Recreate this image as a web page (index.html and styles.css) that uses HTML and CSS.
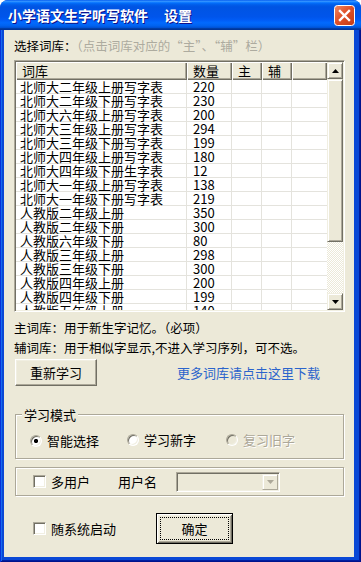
FILE: index.html
```html
<!DOCTYPE html>
<html lang="zh-CN">
<head>
<meta charset="utf-8">
<title>设置</title>
<link rel="stylesheet" href="styles.css">
</head>
<body>
<div class="window">
  <header class="titlebar">
    <span class="title">小学语文生字听写软件<span class="title-sub">设置</span></span>
    <span class="close">
      <svg width="21" height="21" viewBox="0 0 21 21">
        <defs>
          <linearGradient id="cg" x1="0" y1="0" x2="1" y2="1">
            <stop offset="0" stop-color="#F08A66"/>
            <stop offset="0.45" stop-color="#E0522A"/>
            <stop offset="1" stop-color="#C23A14"/>
          </linearGradient>
        </defs>
        <rect x="0.5" y="0.5" width="20" height="20" rx="3" fill="url(#cg)" stroke="#fff"/>
        <path d="M6 6 L15 15 M15 6 L6 15" stroke="#fff" stroke-width="2.4" stroke-linecap="square"/>
      </svg>
    </span>
  </header>
  <div class="frame">
    <main class="client">
      <div class="hint">选择词库：<span class="hint-gray">（点击词库对应的“主”、“辅”栏）</span></div>

      <div class="listbox">
        <div class="lv">
          <div class="lv-head">
            <div class="hd">词库</div>
            <div class="hd">数量</div>
            <div class="hd">主</div>
            <div class="hd">辅</div>
            <div class="hd"></div>
          </div>
          <div class="lv-body">
            <div class="row"><span>北师大二年级上册写字表</span><span>220</span><span></span><span></span><span></span></div>
            <div class="row"><span>北师大二年级下册写字表</span><span>230</span><span></span><span></span><span></span></div>
            <div class="row"><span>北师大六年级上册写字表</span><span>200</span><span></span><span></span><span></span></div>
            <div class="row"><span>北师大三年级上册写字表</span><span>294</span><span></span><span></span><span></span></div>
            <div class="row"><span>北师大三年级下册写字表</span><span>199</span><span></span><span></span><span></span></div>
            <div class="row"><span>北师大四年级上册写字表</span><span>180</span><span></span><span></span><span></span></div>
            <div class="row"><span>北师大四年级下册生字表</span><span>12</span><span></span><span></span><span></span></div>
            <div class="row"><span>北师大一年级上册写字表</span><span>138</span><span></span><span></span><span></span></div>
            <div class="row"><span>北师大一年级下册写字表</span><span>219</span><span></span><span></span><span></span></div>
            <div class="row"><span>人教版二年级上册</span><span>350</span><span></span><span></span><span></span></div>
            <div class="row"><span>人教版二年级下册</span><span>300</span><span></span><span></span><span></span></div>
            <div class="row"><span>人教版六年级下册</span><span>80</span><span></span><span></span><span></span></div>
            <div class="row"><span>人教版三年级上册</span><span>298</span><span></span><span></span><span></span></div>
            <div class="row"><span>人教版三年级下册</span><span>300</span><span></span><span></span><span></span></div>
            <div class="row"><span>人教版四年级上册</span><span>200</span><span></span><span></span><span></span></div>
            <div class="row"><span>人教版四年级下册</span><span>199</span><span></span><span></span><span></span></div>
            <div class="row"><span>人教版五年级上册</span><span>140</span><span></span><span></span><span></span></div>
          </div>
        </div>
        <div class="vscroll">
          <div class="sb-btn"><svg width="7" height="4" viewBox="0 0 7 4"><path d="M3.5 0 L7 4 L0 4 Z" fill="#000"/></svg></div>
          <div class="sb-thumb"></div>
          <div class="sb-track"></div>
          <div class="sb-btn"><svg width="7" height="4" viewBox="0 0 7 4"><path d="M0 0 L7 0 L3.5 4 Z" fill="#000"/></svg></div>
        </div>
      </div>

      <p class="note first">主词库：用于新生字记忆。（必项）</p>
      <p class="note">辅词库：用于相似字显示,不进入学习序列，可不选。</p>

      <div class="actions">
        <button class="btn btn-relearn">重新学习</button>
        <a class="more-link" href="#">更多词库请点击这里下载</a>
      </div>

      <section class="group group-mode">
        <span class="legend">学习模式</span>
        <div class="radios">
          <label class="opt opt-1"><span class="radio checked"></span>智能选择</label>
          <label class="opt opt-2"><span class="radio"></span>学习新字</label>
          <label class="opt opt-3 disabled"><span class="radio"></span>复习旧字</label>
        </div>
      </section>

      <section class="group group-user">
        <label class="chk-label"><span class="checkbox"></span>多用户</label>
        <span class="user-label">用户名</span>
        <span class="combo">
          <span class="combo-btn"><svg width="7" height="4" viewBox="0 0 7 4"><path d="M0 0 L7 0 L3.5 4 Z" fill="#ACA899"/></svg></span>
        </span>
      </section>

      <div class="bottom">
        <label class="chk-label"><span class="checkbox"></span>随系统启动</label>
        <button class="btn btn-default">确定</button>
      </div>
    </main>
  </div>
</div>
</body>
</html>
```

FILE: styles.css
```css
html, body {
  margin: 0;
  padding: 0;
}
body {
  width: 361px;
  height: 562px;
  overflow: hidden;
  background: #fff;
  font-family: "Noto Sans CJK SC", "Noto Sans", sans-serif;
  font-size: 13px;
  color: #000;
}
.window {
  width: 361px;
  height: 562px;
  display: flex;
  flex-direction: column;
  border-radius: 8px 8px 0 0;
  overflow: hidden;
  background: #0B4BDB;
}
.titlebar {
  height: 30px;
  flex: none;
  box-sizing: border-box;
  display: flex;
  align-items: center;
  justify-content: space-between;
  padding: 0 6px 0 8px;
  background: linear-gradient(180deg, #0058EE 0%, #3593FF 4%, #288EFF 6%, #127DFF 8%, #036FFC 10%, #0262EE 14%, #0057E5 20%, #0054E3 24%, #0055EB 56%, #005BF5 66%, #026AFE 76%, #0062EF 86%, #0052D6 92%, #0040AB 94%, #003092 100%);
}
.title {
  color: #fff;
  font-weight: 700;
  font-size: 14px;
  line-height: 18px;
  text-shadow: 1px 1px 0 #0F1089;
  white-space: nowrap;
}
.title-sub {
  margin-left: 16px;
}
.close {
  display: block;
  width: 21px;
  height: 21px;
  margin-top: 1px;
}
.close svg {
  display: block;
}
.frame {
  flex: 1;
  display: flex;
  padding: 0 7px 5px 4px;
  background: #0A48D6;
  box-shadow: inset 1px 0 #0831D9, inset -1px -1px #00138C, inset 2px 0 #166AEE, inset -2px -2px #001EA0;
}
.client {
  flex: 1;
  display: flex;
  flex-direction: column;
  background: #ECE9D8;
  padding: 8px 9px 0 10px;
}
.hint {
  font-size: 12.5px;
  line-height: 16px;
  white-space: nowrap;
}
.hint-gray {
  color: #ADAB9F;
}

/* list box */
.listbox {
  margin-top: 6px;
  height: 252px;
  box-sizing: border-box;
  display: flex;
  border: 1px solid;
  border-color: #ACA899 #fff #fff #ACA899;
  padding: 1px;
  box-shadow: inset 1px 1px #716F64, inset -1px -1px #F1EFE2;
  background: #fff;
}
.lv {
  flex: 1;
  display: flex;
  flex-direction: column;
  overflow: hidden;
  background: #fff;
}
.lv-head, .row {
  display: grid;
  grid-template-columns: 171px 45px 30px 30px 1fr;
}
.lv-head {
  height: 18px;
  flex: none;
}
.hd {
  background: #ECE9D8;
  box-shadow: inset 1px 1px #fff, inset -1px -1px #716F64, inset -2px -2px #ACA899;
  padding-left: 6px;
  line-height: 18px;
  font-size: 13px;
}
.lv-body {
  flex: 1;
  overflow: hidden;
}
.row {
  height: 14px;
  box-sizing: border-box;
  border-bottom: 1px solid #E4E3DD;
}
.row span {
  border-right: 1px solid #E4E3DD;
  line-height: 13px;
  font-size: 13px;
  padding-left: 6px;
  white-space: nowrap;
}
.row span:first-child {
  padding-left: 4px;
}
.row span:last-child {
  border-right: 0;
}
.vscroll {
  width: 16px;
  flex: none;
  display: flex;
  flex-direction: column;
}
.sb-btn, .sb-thumb {
  background: #ECE9D8;
  box-sizing: border-box;
  border: 1px solid;
  border-color: #F1EFE2 #716F64 #716F64 #F1EFE2;
  box-shadow: inset 1px 1px #fff, inset -1px -1px #ACA899;
}
.sb-btn {
  height: 17px;
  flex: none;
  display: flex;
  align-items: center;
  justify-content: center;
}
.sb-btn svg {
  display: block;
}
.sb-thumb {
  height: 163px;
  flex: none;
}
.sb-track {
  flex: 1;
  background-color: #ECE9D8;
  background-image: repeating-conic-gradient(#fff 0% 25%, #ECE9D8 0% 50%);
  background-size: 2px 2px;
}

/* notes */
.note {
  margin: 0;
  line-height: 20px;
  font-size: 12.5px;
  white-space: nowrap;
}
.note.first {
  margin-top: 6px;
}

.btn {
  font-family: inherit;
  font-size: 13px;
  color: #000;
  background: #ECE9D8;
  padding: 0;
  margin: 0;
  box-sizing: border-box;
  border-radius: 0;
}
.actions {
  display: flex;
  align-items: center;
  margin-top: 1px;
}
.btn-relearn {
  width: 82px;
  height: 27px;
  margin-left: 1px;
  border: 1px solid;
  border-color: #fff #716F64 #716F64 #fff;
  box-shadow: inset -1px -1px #ACA899, inset 1px 1px #F1EFE2;
}
.more-link {
  margin-left: 80px;
  color: #2B64CC;
  text-decoration: none;
  font-size: 13px;
}

/* group boxes */
.group {
  display: flex;
  border: 1px solid #ACA899;
  box-shadow: inset 1px 1px #fff, 1px 1px #fff;
  margin-left: 1px;
  margin-right: 1px;
}
.group-mode {
  flex-direction: column;
  align-items: flex-start;
  margin-top: 28px;
  padding-bottom: 9px;
}
.legend {
  margin-top: -8px;
  margin-left: 6px;
  padding: 0 2px;
  background: #ECE9D8;
  line-height: 16px;
  font-size: 13px;
}
.radios {
  display: grid;
  grid-template-columns: 97px 99px auto;
  margin-top: 7px;
  padding-left: 14px;
  align-items: center;
}
.opt {
  display: flex;
  align-items: center;
  gap: 5px;
  line-height: 16px;
}
.opt-1 {
  margin-top: 3px;
}
.opt.disabled {
  color: #ACA899;
  text-shadow: 1px 1px 0 #fff;
}
.radio {
  width: 12px;
  height: 12px;
  box-sizing: border-box;
  border-radius: 50%;
  border: 1px solid;
  border-color: #ACA899 #fff #fff #ACA899;
  box-shadow: inset 1px 1px #716F64, inset -1px -1px #F1EFE2;
  background: #fff;
}
.radio.checked {
  background: radial-gradient(circle, #000 0 1.8px, #fff 2.4px);
}
.opt.disabled .radio {
  background: #ECE9D8;
}

.group-user {
  margin-top: 8px;
  height: 29px;
  box-sizing: border-box;
  align-items: center;
  padding-left: 17px;
}
.chk-label {
  display: flex;
  align-items: center;
  gap: 5px;
  line-height: 16px;
}
.checkbox {
  width: 13px;
  height: 13px;
  box-sizing: border-box;
  border: 1px solid;
  border-color: #ACA899 #fff #fff #ACA899;
  box-shadow: inset 1px 1px #716F64, inset -1px -1px #F1EFE2;
  background: #fff;
}
.user-label {
  margin-left: 28px;
  line-height: 16px;
}
.combo {
  margin-left: 19px;
  width: 104px;
  height: 20px;
  box-sizing: border-box;
  display: flex;
  justify-content: flex-end;
  border: 1px solid;
  border-color: #ACA899 #fff #fff #ACA899;
  padding: 1px;
  box-shadow: inset 1px 1px #716F64, inset -1px -1px #F1EFE2;
  background: #ECE9D8;
}
.combo-btn {
  width: 16px;
  height: 16px;
  box-sizing: border-box;
  display: flex;
  align-items: center;
  justify-content: center;
  border: 1px solid;
  border-color: #F1EFE2 #ACA899 #ACA899 #F1EFE2;
  box-shadow: inset 1px 1px #fff;
  background: #ECE9D8;
}
.combo-btn svg {
  display: block;
}

.bottom {
  display: flex;
  align-items: center;
  margin-top: 17px;
  padding-left: 19px;
}
.btn-default {
  margin-left: 40px;
  width: 77px;
  height: 31px;
  border: 1px solid #000;
  box-shadow: inset 1px 1px #fff, inset -1px -1px #716F64, inset 2px 2px #F1EFE2, inset -2px -2px #ACA899;
  outline: 1px dotted #000;
  outline-offset: -5px;
}
```
